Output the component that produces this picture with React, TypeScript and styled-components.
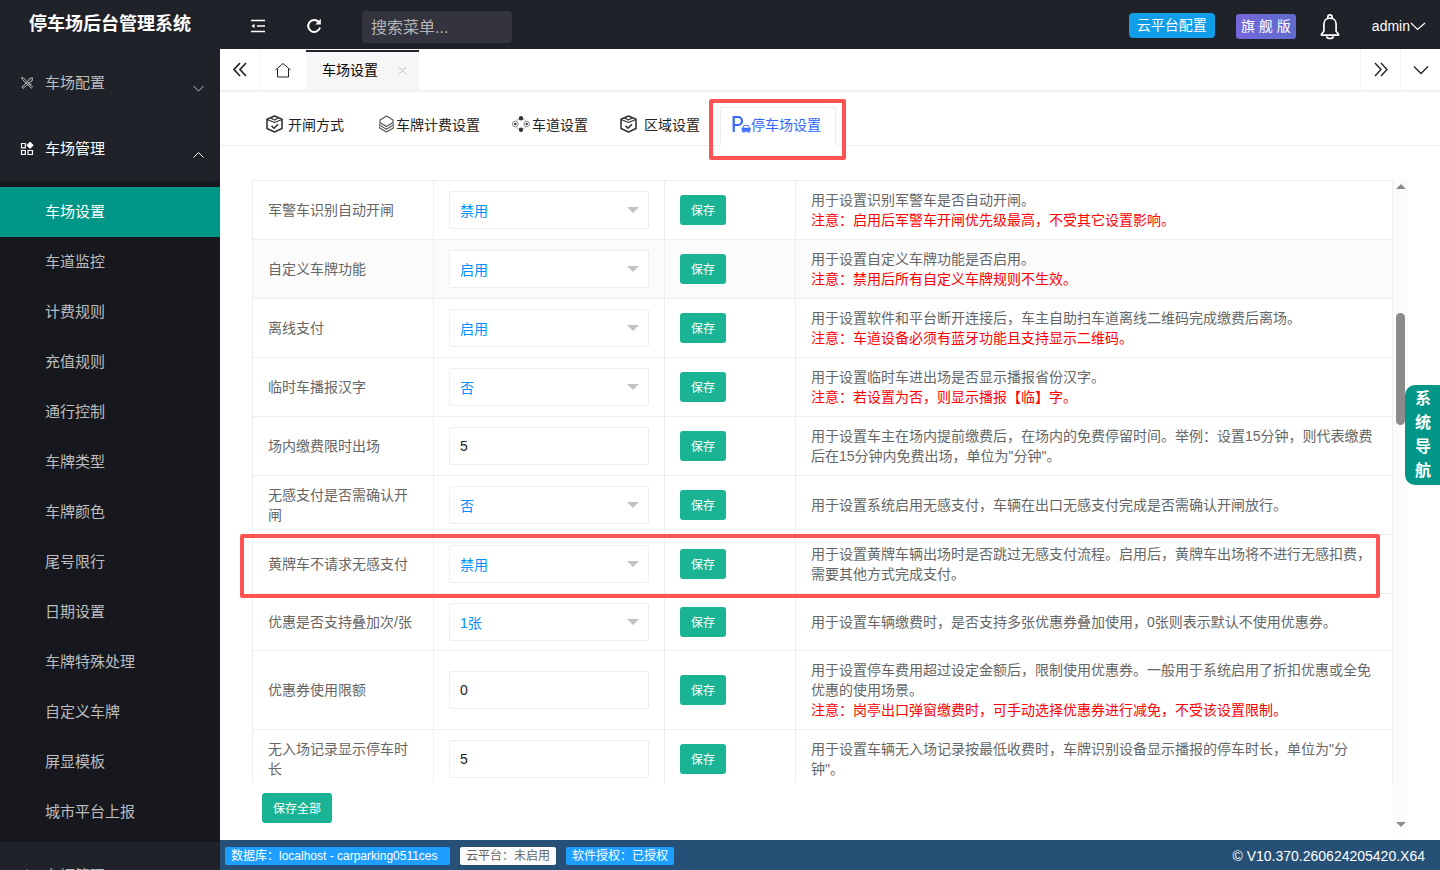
import React from "react";
import styled, { createGlobalStyle, css } from "styled-components";

const GlobalStyle = createGlobalStyle`
  *, *::before, *::after { box-sizing: border-box; }
  body {
    margin: 0;
    background: #fff;
    color: #333;
    font: 14px/20px "Liberation Sans", "Noto Sans CJK SC", sans-serif;
  }
  button, input, select { font-family: inherit; margin: 0; }
  button { border: 0; padding: 0; background: none; cursor: pointer; }
  a { color: inherit; text-decoration: none; }
  ul { list-style: none; margin: 0; padding: 0; }
`;

const Shell = styled.div`
  position: relative;
  display: flex;
  height: 100vh;
  overflow: hidden;
`;

/* Sidebar */
const Sidebar = styled.nav`
  flex: 0 0 220px;
  background: #20222a;
  color: #bcbdbf;
  font-size: 15px;
  overflow: hidden;
`;
const Brand = styled.h1`
  margin: 0;
  height: 49px;
  font-size: 18px;
  line-height: 48px;
  text-align: center;
  color: #fff;
  box-shadow: 0 1px 2px rgba(0, 0, 0, 0.15);
`;
const Group = styled.a<{ $open?: boolean }>`
  display: flex;
  align-items: center;
  height: 66px;
  padding: 2px 16px 0 20px;
  color: ${(p) => (p.$open ? "#fff" : "#bcbdbf")};
  svg:first-child { margin-right: 11px; }
  svg:last-child { margin: 12px 0 0 auto; }
`;
const SubMenu = styled.ul`
  padding: 6px 0 5px;
  background: #17181d;
`;
const SubLink = styled.a<{ $active?: boolean }>`
  display: block;
  padding-left: 45px;
  line-height: 50px;
  ${(p) => p.$active && css`background: #009688; color: #fff;`}
`;

/* Header */
const Main = styled.div`
  flex: 1;
  min-width: 0;
  display: flex;
  flex-direction: column;
`;
const Header = styled.header`
  flex: 0 0 49px;
  display: flex;
  align-items: center;
  padding: 0 14px 2px 29px;
  background: #20222a;
  color: #fff;
`;
const IconButton = styled.button`
  display: flex;
  align-items: center;
  justify-content: center;
  color: inherit;
`;
const ToolButton = styled(IconButton)`
  width: 18px;
  height: 30px;
  margin-top: 4px;
  margin-right: 38px;
`;
const Search = styled.input`
  width: 150px;
  height: 32px;
  margin: 6px auto 0 1px;
  padding: 2px 9px 0;
  border: 0;
  border-radius: 4px;
  background: #33343d;
  color: #fff;
  font-size: 16px;
  &::placeholder { color: #b4b5b8; opacity: 1; }
`;
const CloudButton = styled.button`
  width: 86px;
  height: 25px;
  margin-top: 4px;
  padding-bottom: 3px;
  border-radius: 4px;
  background: #109ee9;
  color: #fff;
  font-size: 14px;
`;
const Edition = styled.span`
  width: 60px;
  margin: 6px 24px 0 21px;
  border-radius: 3px;
  background: linear-gradient(90deg, #7468da, #5f6bcb);
  line-height: 25px;
  text-align: center;
`;
const UserMenu = styled.button`
  display: flex;
  align-items: center;
  margin: 4px 0 0 32px;
  color: #fff;
  font-size: 14px;
`;

/* Page tabs */
const PageTabs = styled.div`
  flex: 0 0 42px;
  display: flex;
  border-bottom: 1px solid #eee;
  box-shadow: 0 1px 2px rgba(0, 0, 0, 0.06);
  color: #222;
`;
const TabArrow = styled(IconButton)<{ $side: "left" | "right" }>`
  width: 40px;
  border-${(p) => (p.$side === "left" ? "right" : "left")}: 1px solid #f4f4f4;
`;
const HomeTab = styled(IconButton)`
  width: 46px;
`;
const PageTab = styled.div`
  display: flex;
  align-items: center;
  gap: 20px;
  margin: 1px auto 0 0;
  padding: 0 12px 2px 16px;
  border-top: 2px solid #20222a;
  background: #f6f6f6;
  color: #000;
`;
const CloseButton = styled(IconButton)`
  color: #bbb;
`;

/* Setting tabs */
const SettingTabs = styled.div`
  flex: 0 0 55px;
  display: flex;
  align-items: flex-end;
  gap: 5px;
  padding-left: 34px;
  border-bottom: 1px solid #eee;
`;
const SettingTab = styled.button<{ $active?: boolean; $gap: number }>`
  position: relative;
  display: flex;
  align-items: center;
  height: 39px;
  margin-bottom: -1px;
  padding: 0 15px 6px 12px;
  font-size: 14px;
  color: #222;
  white-space: nowrap;
  svg { margin-right: ${(p) => p.$gap}px; }
  ${(p) =>
    p.$active &&
    css`
      border: 1px solid #eee;
      border-bottom-color: #fff;
      border-radius: 2px 2px 0 0;
      background: #fff;
      padding-left: 11px;
      padding-right: 14px;
      color: #3366ff;
    `}
`;
const Marker = styled.div`
  position: absolute;
  border: 4px solid #ff5252;
  border-radius: 2px;
  pointer-events: none;
`;
const TabMarker = styled(Marker)`
  inset: -9px -11px -15px -12px;
`;
const RowMarker = styled(Marker)`
  inset: 356px 28px auto -12px;
  height: 64px;
`;

/* Settings panel */
const Panel = styled.main`
  position: relative;
  flex: 1;
  min-height: 0;
  display: flex;
  margin: 32px 32px 7px;
`;
const PanelBody = styled.form`
  flex: 1;
  min-width: 0;
  display: flex;
  flex-direction: column;
`;
const TableView = styled.div`
  flex: 1;
  min-height: 0;
  padding-top: 2px;
  overflow: hidden;
`;
const Table = styled.table`
  width: 100%;
  table-layout: fixed;
  border-collapse: collapse;
  color: #666;
`;
const Row = styled.tr<{ $hover?: boolean }>`
  background: ${(p) => (p.$hover ? "#fbfbfb" : "#fff")};
`;
const Cell = styled.td`
  padding: 9px 15px;
  border: 1px solid #eee;
`;
const Note = styled.div`
  color: #f00;
`;
const Field = styled.input`
  display: block;
  width: 100%;
  height: 38px;
  padding: 0 10px;
  border: 1px solid #eee;
  border-radius: 2px;
  background: #fff;
  color: #222;
  font-size: 14px;
`;
const SelectBox = styled.div`
  position: relative;
  &::after {
    content: "";
    position: absolute;
    right: 10px;
    top: 16px;
    border: 6px solid transparent;
    border-top-color: #c2c2c2;
    border-bottom: 0;
    pointer-events: none;
  }
`;
const Select = styled(Field)`
  appearance: none;
  padding-top: 1px;
  color: #0090ff;
`;
const SaveButton = styled.button`
  display: block;
  height: 30px;
  padding: 0 11px 2px;
  border-radius: 3px;
  background: #1ab394;
  color: #fff;
  font-size: 12px;
`;
const Actions = styled.div`
  flex: 0 0 50px;
  padding: 10px;
`;
const Scrollbar = styled.div`
  flex: 0 0 15px;
  display: flex;
  flex-direction: column;
  align-items: center;
  padding: 6px 0;
  background: #fbfbfb;
`;
const Thumb = styled.div`
  width: 9px;
  height: 112px;
  margin: 124px 0 auto;
  border-radius: 5px;
  background: #8b8b8b;
`;
const ScrollArrow = styled.i<{ $down?: boolean }>`
  border: 5px solid transparent;
  ${(p) => (p.$down ? "border-top-color: #8b8b8b; border-bottom: 0;" : "border-bottom-color: #8b8b8b; border-top: 0;")}
`;

const Status = styled.footer`
  flex: 0 0 30px;
  display: flex;
  align-items: center;
  gap: 10px;
  padding: 1px 15px 0 5px;
  background: #265076;
  color: #fff;
`;
const Badge = styled.span<{ $plain?: boolean; $wide?: boolean }>`
  min-width: ${(p) => (p.$wide ? "225px" : "0")};
  padding: 0 6px;
  border-radius: 2px;
  background: ${(p) => (p.$plain ? "#fafafa" : "#1e9fff")};
  color: ${(p) => (p.$plain ? "#666" : "#fff")};
  font-size: 12px;
  line-height: 18px;
  white-space: nowrap;
`;
const Version = styled.span`
  margin-left: auto;
`;
const GuideButton = styled.button`
  position: absolute;
  top: 385px;
  right: 0;
  width: 35px;
  height: 100px;
  padding: 0 9px 0 10px;
  border-radius: 10px 0 0 10px;
  background: #009688;
  color: #fff;
  font-size: 16px;
  font-weight: bold;
  line-height: 24px;
`;

/* Icons */
const Line = ({ d, w = 16, h = w, box, sw = 1.5 }: { d: string; w?: number; h?: number; box?: string; sw?: number }) => (
  <svg width={w} height={h} viewBox={box ?? `0 0 ${w} ${h}`} fill="none" stroke="currentColor" strokeWidth={sw} aria-hidden="true">
    <path d={d} />
  </svg>
);
const Cube = () => (
  <svg width="18" height="18" viewBox="0 0 18 18" fill="none" stroke="#333" strokeWidth="1.6" strokeLinejoin="round" aria-hidden="true">
    <path d="M8.500 1 16 4.300V13.500L8.500 17 1 13.500V4.300Z" />
    <path d="M1 4.500 8.500 7.500 16 4.500M4.800 3l3.700 2 3.700-2" strokeWidth="1.300" />
    <path d="m5.500 10.800 2.500 2.500 4-4" />
  </svg>
);
const Layers = () => (
  <svg width="20" height="18" viewBox="0 0 20 18" fill="none" stroke="#555" strokeWidth="1.200" strokeLinejoin="round" aria-hidden="true">
    <path d="M10.500 1 17 5v2.500l-6.500 4L4 7.500V5Z" />
    <path d="M3.600 8.500v1.500l6.900 4.200 6.900-4.200V8.500M3.600 11.500v1.500l6.900 4 6.900-4v-1.500" />
  </svg>
);
const Lanes = () => (
  <svg width="18" height="18" viewBox="0 0 18 18" fill="none" stroke="#888" aria-hidden="true">
    <circle cx="3.300" cy="9" r="2.800" />
    <circle cx="14.700" cy="9" r="2.800" />
    <g fill="#333" stroke="none">
      <circle cx="9" cy="3.300" r="2.200" />
      <circle cx="9" cy="14.700" r="2.200" />
      <circle cx="3.300" cy="9" r="1.200" />
      <circle cx="14.700" cy="9" r="1.200" />
    </g>
    <path d="m5 5.500 1.500-1.500M13 5.500 11.500 4M5 12.500 6.500 14M13 12.500 11.500 14" />
  </svg>
);
const Parking = () => (
  <svg width="19" height="18" viewBox="0 0 19 18" fill="none" aria-hidden="true">
    <path d="M1.700 17V2H6a3.900 3.900 0 0 1 0 8H2" stroke="#36f" strokeWidth="2.200" />
    <path d="m11.500 10-1 2.500H9.700V17h1.500v1h1.300v-1h3.500v1h1.300v-1h1.200v-4.500h-.8l-1-2.500Zm.8 1h3.900l.6 1.800h-5.100Z" fill="#5a80ff" />
    <path d="M9.900 14h8.400" stroke="#36f" strokeWidth="1.500" />
  </svg>
);
const Bell = () => (
  <svg width="20" height="32" viewBox="0 -6 20 32" fill="none" stroke="#fff" strokeWidth="1.700" aria-hidden="true">
    <path d="M7.800 4.200V3a2.200 2.200 0 0 1 4.400 0v1.200" />
    <path d="M1.500 21.200v-1l2.400-3V10c0-3.500 2.600-5.800 6.100-5.800s6.100 2.300 6.100 5.800v7.200l2.400 3v1Z" strokeLinejoin="round" />
    <path d="M6.500 22.500a3.600 2.600 0 0 0 7 0" />
  </svg>
);
const Tools = () => (
  <svg width="14" height="14" viewBox="0 0 14 14" fill="none" stroke="currentColor" strokeWidth="1" aria-hidden="true">
    <path d="m1.500 1.500 2.200.5 8.800 9-1.200 1.200-9-8.800ZM12.500 1.800 9.500 2.500 8.500 5l-6.500 6 1 1.500 6.500-6L12 5ZM8.500 9l3-1" />
  </svg>
);
const Apps = () => (
  <svg width="14" height="14" viewBox="0 0 14 14" fill="none" stroke="currentColor" strokeWidth="1.200" aria-hidden="true">
    <path d="M1.500 1.500h3.800v4.300H1.500ZM1.500 8.500h3.800v4H1.500ZM8 8.500h4.500v4H8Z" />
    <path d="m10 .5 2.800 2.800L10 6.100 7.200 3.300Z" fill="currentColor" />
  </svg>
);
const Outdent = () => (
  <svg width="16" height="14" viewBox="0 0 16 14" fill="none" stroke="currentColor" strokeWidth="1.500" aria-hidden="true">
    <path d="M1 1.500h14M7 7h8M1 12.500h14" />
    <path d="M4.500 4.800V9.200L1.500 7Z" fill="currentColor" stroke="none" />
  </svg>
);
const Refresh = () => (
  <svg width="16" height="16" viewBox="0 0 16 16" fill="none" stroke="currentColor" strokeWidth="2" aria-hidden="true">
    <path d="M12.700 4A6 6 0 1 0 14 9.500" />
    <path d="M14.800.8V6.500H9.200Z" fill="currentColor" stroke="none" />
  </svg>
);

const menu = ["车场设置", "车道监控", "计费规则", "充值规则", "通行控制", "车牌类型", "车牌颜色", "尾号限行", "日期设置", "车牌特殊处理", "自定义车牌", "屏显模板", "城市平台上报"];

type Setting = { name: string; value: string; input?: boolean; text: string; note?: string; hover?: boolean };
const settings: Setting[] = [
  { name: "军警车识别自动开闸", value: "禁用", text: "用于设置识别军警车是否自动开闸。", note: "注意：启用后军警车开闸优先级最高，不受其它设置影响。" },
  { name: "自定义车牌功能", value: "启用", text: "用于设置自定义车牌功能是否启用。", note: "注意：禁用后所有自定义车牌规则不生效。", hover: true },
  { name: "离线支付", value: "启用", text: "用于设置软件和平台断开连接后，车主自助扫车道离线二维码完成缴费后离场。", note: "注意：车道设备必须有蓝牙功能且支持显示二维码。" },
  { name: "临时车播报汉字", value: "否", text: "用于设置临时车进出场是否显示播报省份汉字。", note: "注意：若设置为否，则显示播报【临】字。" },
  { name: "场内缴费限时出场", value: "5", input: true, text: "用于设置车主在场内提前缴费后，在场内的免费停留时间。举例：设置15分钟，则代表缴费后在15分钟内免费出场，单位为\"分钟\"。" },
  { name: "无感支付是否需确认开闸", value: "否", text: "用于设置系统启用无感支付，车辆在出口无感支付完成是否需确认开闸放行。" },
  { name: "黄牌车不请求无感支付", value: "禁用", text: "用于设置黄牌车辆出场时是否跳过无感支付流程。启用后，黄牌车出场将不进行无感扣费，需要其他方式完成支付。" },
  { name: "优惠是否支持叠加次/张", value: "1张", text: "用于设置车辆缴费时，是否支持多张优惠券叠加使用，0张则表示默认不使用优惠券。" },
  { name: "优惠券使用限额", value: "0", input: true, text: "用于设置停车费用超过设定金额后，限制使用优惠券。一般用于系统启用了折扣优惠或全免优惠的使用场景。", note: "注意：岗亭出口弹窗缴费时，可手动选择优惠券进行减免，不受该设置限制。" },
  { name: "无入场记录显示停车时长", value: "5", input: true, text: "用于设置车辆无入场记录按最低收费时，车牌识别设备显示播报的停车时长，单位为\"分钟\"。" },
];

export default function App() {
  return (
    <Shell>
      <GlobalStyle />
      <Sidebar>
        <Brand>停车场后台管理系统</Brand>
        <Group href="#config">
          <Tools />
          车场配置
          <Line d="M.5 1 5.500 6l5-5" w={11} h={8} sw={1} />
        </Group>
        <Group href="#manage" $open>
          <Apps />
          车场管理
          <Line d="M.5 6.500 5.500 1.500l5 5" w={11} h={8} sw={1} />
        </Group>
        <SubMenu>
          {menu.map((m, i) => (
            <li key={m}>
              <SubLink href={`#menu-${i}`} $active={i === 0}>{m}</SubLink>
            </li>
          ))}
        </SubMenu>
        <Group href="#vehicle">
          <Line d="M7 1a4 4 0 1 1 0 8 4 4 0 0 1 0-8ZM1 14c0-4 12-4 12 0" w={14} sw={1} />
          车辆管理
          <Line d="M.5 1 5.500 6l5-5" w={11} h={8} sw={1} />
        </Group>
      </Sidebar>

      <Main>
        <Header>
          <ToolButton aria-label="收起菜单"><Outdent /></ToolButton>
          <ToolButton aria-label="刷新"><Refresh /></ToolButton>
          <Search placeholder="搜索菜单..." aria-label="搜索菜单" />
          <CloudButton>云平台配置</CloudButton>
          <Edition>旗 舰 版</Edition>
          <IconButton aria-label="消息"><Bell /></IconButton>
          <UserMenu>
            admin
            <Line d="m1 2 6.500 6.500L15 2" w={16} h={10} sw={1.2} />
          </UserMenu>
        </Header>

        <PageTabs>
          <TabArrow $side="left" aria-label="向左"><Line d="M8 1 2 7.500 8 14M14 1 8 7.500l6 6.500" w={16} h={15} sw={1.7} /></TabArrow>
          <HomeTab aria-label="首页"><Line d="M.5 8 8 1.500 15.500 8M2.500 7v8h11V7" w={16} sw={1} /></HomeTab>
          <PageTab>
            车场设置
            <CloseButton aria-label="关闭"><Line d="m1 1 7 7M8 1 1 8" w={9} sw={1} box="0 0 9 9" /></CloseButton>
          </PageTab>
          <TabArrow $side="right" aria-label="向右"><Line d="m2 1 6 6.500L2 14M8 1l6 6.500L8 14" w={16} h={15} sw={1.4} /></TabArrow>
          <TabArrow $side="right" aria-label="更多"><Line d="m1 1.500 7 7 7-7" w={16} h={10} sw={1.3} /></TabArrow>
        </PageTabs>

        <SettingTabs>
          <SettingTab $gap={4}><Cube />开闸方式</SettingTab>
          <SettingTab $gap={0}><Layers />车牌计费设置</SettingTab>
          <SettingTab $gap={2}><Lanes />车道设置</SettingTab>
          <SettingTab $gap={6}><Cube />区域设置</SettingTab>
          <SettingTab $gap={0} $active><Parking />停车场设置<TabMarker /></SettingTab>
        </SettingTabs>

        <Panel>
          <PanelBody onSubmit={(e) => e.preventDefault()}>
            <TableView>
              <Table>
                <colgroup>
                  <col style={{ width: 181 }} />
                  <col style={{ width: 231 }} />
                  <col style={{ width: 131 }} />
                  <col />
                </colgroup>
                <tbody>
                  {settings.map((s, i) => (
                    <Row key={s.name} $hover={s.hover}>
                      <Cell><label htmlFor={`f${i}`}>{s.name}</label></Cell>
                      <Cell>
                        {s.input ? (
                          <Field id={`f${i}`} defaultValue={s.value} />
                        ) : (
                          <SelectBox>
                            <Select as="select" id={`f${i}`} defaultValue={s.value}>
                              <option>{s.value}</option>
                            </Select>
                          </SelectBox>
                        )}
                      </Cell>
                      <Cell><SaveButton type="button">保存</SaveButton></Cell>
                      <Cell>
                        {s.text}
                        {s.note && <Note>{s.note}</Note>}
                      </Cell>
                    </Row>
                  ))}
                </tbody>
              </Table>
            </TableView>
            <Actions><SaveButton type="submit">保存全部</SaveButton></Actions>
          </PanelBody>
          <Scrollbar>
            <ScrollArrow />
            <Thumb />
            <ScrollArrow $down />
          </Scrollbar>
          <RowMarker />
        </Panel>

        <Status>
          <Badge $wide>数据库：localhost - carparking0511ces</Badge>
          <Badge $plain>云平台：未启用</Badge>
          <Badge>软件授权：已授权</Badge>
          <Version>© V10.370.260624205420.X64</Version>
        </Status>
      </Main>
      <GuideButton>系统导航</GuideButton>
    </Shell>
  );
}
